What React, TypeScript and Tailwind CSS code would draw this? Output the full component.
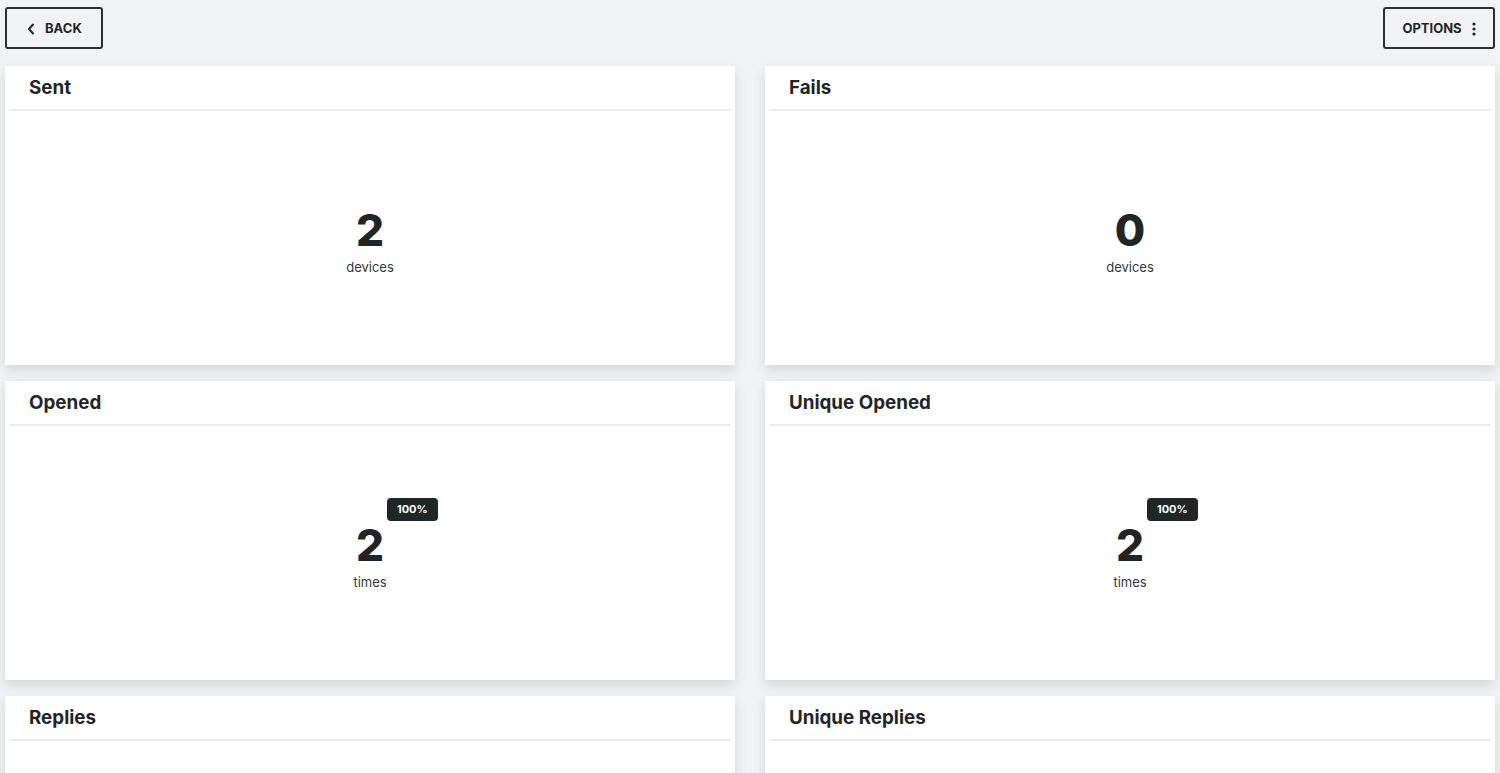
import React from "react";

type Stat = { title: string; value: string; unit: string; badge?: string };

const stats: Stat[] = [
  { title: "Sent", value: "2", unit: "devices" },
  { title: "Fails", value: "0", unit: "devices" },
  { title: "Opened", value: "2", unit: "times", badge: "100%" },
  { title: "Unique Opened", value: "2", unit: "times", badge: "100%" },
  { title: "Replies", value: "0", unit: "times", badge: "0%" },
  { title: "Unique Replies", value: "0", unit: "times", badge: "0%" },
];

function ChevronLeft() {
  return (
    <svg width="8" height="12" viewBox="0 0 8 12" fill="none">
      <path d="M6 1.5L2 6l4 4.5" stroke="#1f2626" strokeWidth="2" strokeLinecap="round" strokeLinejoin="round" />
    </svg>
  );
}

function Dots() {
  return (
    <svg width="4" height="14" viewBox="0 0 4 14" fill="#1f2626">
      <circle cx="2" cy="2" r="1.6" />
      <circle cx="2" cy="7" r="1.6" />
      <circle cx="2" cy="12" r="1.6" />
    </svg>
  );
}

function StatCard({ s }: { s: Stat }) {
  return (
    <div className="bg-white h-[299px] flex flex-col shadow-[0_5px_12px_rgba(0,0,0,0.13)]">
      <div className="h-[43px] flex items-center pl-6 pt-[1px]">
        <span className="text-[18.8px] font-bold text-[#1f2626]">{s.title}</span>
      </div>
      <div className="mx-1 h-[2px] bg-[#ececec]" />
      <div className="flex-1 flex items-center justify-center pt-[9px]">
        <div className="flex flex-col items-center">
          <div className="relative">
            <span className="text-[44px] leading-[44px] font-extrabold text-[#1f2626]">{s.value}</span>
            {s.badge && (
              <span className="absolute left-[31px] top-[-25px] bg-[#1f2626] text-white text-[11px] font-bold rounded-[4px] h-[23px] px-[10px] flex items-center">
                {s.badge}
              </span>
            )}
          </div>
          <span className="mt-[6px] text-[13px] text-[#333a3a]">{s.unit}</span>
        </div>
      </div>
    </div>
  );
}

export default function App() {
  return (
    <div
      className="h-[773px] overflow-hidden bg-[#f2f3f4] px-[5px] pt-[7px]"
      style={{ fontFamily: "Inter, Lato, sans-serif" }}
    >
      <div className="flex justify-between items-center">
        <button className="h-[42px] w-[98px] border-2 border-[#2b3131] rounded-[3px] flex items-center pl-[20px] pt-[2px] gap-[10px] text-[13px] font-bold text-[#1f2626]">
          <ChevronLeft />
          BACK
        </button>
        <button className="h-[42px] w-[112px] border-2 border-[#2b3131] rounded-[3px] flex items-center justify-center pt-[2px] gap-[10px] text-[13px] font-bold text-[#1f2626]">
          OPTIONS
          <Dots />
        </button>
      </div>
      <div className="mt-[17px] grid grid-cols-2 gap-x-[30px] gap-y-[16px]">
        {stats.map((s) => (
          <StatCard key={s.title} s={s} />
        ))}
      </div>
    </div>
  );
}
